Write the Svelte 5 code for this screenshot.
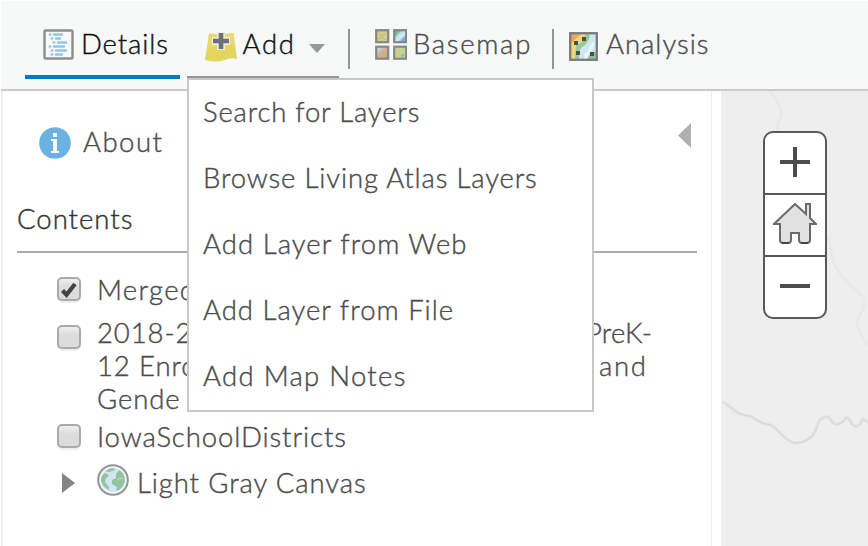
<script>
  const menu = [
    { label: 'Search for Layers', spacing: 0.8 },
    { label: 'Browse Living Atlas Layers', spacing: 0.85 },
    { label: 'Add Layer from Web', spacing: 1.05 },
    { label: 'Add Layer from File', spacing: 1 },
    { label: 'Add Map Notes', spacing: 1.3 }
  ];
</script>

<div class="app">
  <header>
    <button class="tab details">
      <svg width="32" height="32" viewBox="0 0 32 32">
        <rect x="1.5" y="1.5" width="28" height="28" rx="1" fill="#f7f8f8" stroke="#8c8e8e" stroke-width="2.4" />
        <g stroke="#92c3e8" stroke-width="2.4" stroke-linecap="round">
          <path d="M6.8 5.5h.4M11 5.5h8M8.8 9.5h.4M13 9.5h4M10.8 13.5h.4M15 13.5h8M6.8 17.5h.4M11 17.5h10M8.8 21.5h.4M13 21.5h10M8.8 25.5h.4M13 25.5h6" />
        </g>
      </svg>
      <span>Details</span>
    </button>
    <button class="tab add">
      <svg width="34" height="32" viewBox="0 0 34 32">
        <path d="M5 3.5Q17 5 29.5 3L33 29Q26 27 21 30Q11 33 1 30Z" fill="#e3d560" />
        <path d="M5 3.5Q17 5 29.5 3L31 15Q17 12 3 20Z" fill="#e9dd7c" opacity=".6" />
        <path d="M17 2v18M8 11h18" stroke="#efedd9" stroke-width="8" />
        <path d="M17 3v16M9 11h16" stroke="#6c7077" stroke-width="4.6" />
      </svg>
      <span>Add</span>
      <svg class="caret" width="16" height="9" viewBox="0 0 16 9"><path d="M0 0h16L8 9z" fill="#989898" /></svg>
    </button>
    <i class="sep first"></i>
    <button class="tab basemap">
      <svg width="32" height="31" viewBox="0 0 32 31">
        <defs>
          <linearGradient id="water" x2="1" y2="1"><stop offset=".25" stop-color="#80bba0" /><stop offset=".4" stop-color="#c2e1ee" /><stop offset=".6" stop-color="#d5eaf6" /><stop offset=".75" stop-color="#78abd0" /></linearGradient>
          <linearGradient id="land" x2="1" y2="1"><stop offset=".2" stop-color="#b6d5e9" /><stop offset=".45" stop-color="#d4b18e" /><stop offset="1" stop-color="#cda578" /></linearGradient>
        </defs>
        <g stroke="#858787" stroke-width="2.2">
          <rect x="1.2" y="1.2" width="12" height="12" fill="#d1ce86" /><rect x="19.2" y="1.2" width="12" height="12" fill="url(#water)" />
          <rect x="1.2" y="17.7" width="12" height="12" fill="url(#land)" /><rect x="19.2" y="17.7" width="12" height="12" fill="#b9dba8" />
        </g>
        <path d="M4 5l3 2 4-3M3 10l4-2 3 3" stroke="#a9bd82" fill="none" />
        <path d="M21 20l4 4 4-4M21 28l4-4" stroke="#e3c570" stroke-width="2" fill="none" /><path d="M25 27l4-3v4z" fill="#83bfa6" />
      </svg>
      <span>Basemap</span>
    </button>
    <i class="sep second"></i>
    <button class="tab analysis">
      <svg width="30" height="30" viewBox="0 0 30 30">
        <rect x="1" y="1" width="27" height="27" fill="#cee7f3" />
        <path d="M1 1h20Q21 9 15 14Q9 15 10 28H1Z" fill="#9bc69a" />
        <path d="M1 1h16Q14 12 7 13L6 28H1Z" fill="#efd57c" /><path d="M1 1h12L1 12Z" fill="#f2a254" />
        <path d="M15 28Q14 22 19 19Q20 12 26 10L23 18Q18 21 20 28Z" fill="#edf5fc" />
        <path d="M18 28Q20 20 28 19v9Z" fill="#8fc29a" />
        <g fill="#455057"><rect x="13" y="5" width="4" height="4" /><rect x="5" y="9" width="4" height="4" /><rect x="7" y="19" width="4" height="4" /><rect x="21" y="20" width="4" height="4" /></g>
        <rect x="1.2" y="1.2" width="26.6" height="26.6" fill="none" stroke="#7a7c7c" stroke-width="2.3" />
      </svg>
      <span>Analysis</span>
    </button>
  </header>

  <main>
    <section class="panel">
      <div class="about">
        <svg width="32" height="32" viewBox="0 0 32 32"><circle cx="16" cy="16" r="15.8" fill="#6bb2e2" /><path d="M14 6h4v4h-4zM12 12h6v12h2v2h-8v-2h2V14h-2z" fill="#f5f9fc" /></svg>
        <span>About</span>
        <svg class="collapse" width="13" height="25" viewBox="0 0 13 25"><path d="M13 0v25L0 12.5z" fill="#b0b0b0" /></svg>
      </div>
      <h2><span>Contents</span></h2>
      <div class="row merged">
        <i class="box"><svg width="20" height="20" viewBox="0 0 20 20"><path d="M3.5 11.5l4 4.2L16 5" fill="none" stroke="#444" stroke-width="4.2" /></svg></i>
        <span>Merged</span>
      </div>
      <div class="row enroll">
        <i class="box"></i>
        <div class="lines">
          <div><span>2018-2</span><span class="prek">PreK-</span></div>
          <div><span>12 Enro</span><span class="and">and</span></div>
          <div><span>Gende</span></div>
        </div>
      </div>
      <div class="row iowa"><i class="box"></i><span>IowaSchoolDistricts</span></div>
      <div class="row canvas">
        <svg class="twist" width="13" height="20" viewBox="0 0 13 20"><path d="M0 0v20l13-10z" fill="#848484" /></svg>
        <svg class="globe" width="32" height="32" viewBox="0 0 32 32">
          <circle cx="16" cy="16" r="14.8" fill="#f6f8f8" stroke="#929496" stroke-width="2" />
          <circle cx="16" cy="16" r="12" fill="#d0e6f6" />
          <path d="M4 16Q4 10 9 9L12 12L9 14L8 18L12 23L12 26Q5 23 4 16ZM8 7Q12 4 17 4L18 6L12 8ZM22 6Q28 9 28 17Q26 25 19 27L20 23L15 20L15 16L19 14L19 10Z" fill="#91c49f" />
          <path d="M20 16l3-2 3 1" stroke="#c5dfc7" fill="none" />
        </svg>
        <span>Light Gray Canvas</span>
      </div>
    </section>
    <section class="map">
      <svg class="rivers" width="147" height="455" viewBox="721 91 147 455" fill="none">
        <path d="M769 91C777 99 784 109 780 118S778 128 780 133M828 236C833 246 829 257 837 269C846 284 858 290 864 298Q866 306 860 314C853 326 862 337 868 345" stroke="#e7e8ea" stroke-width="2.5" />
        <path d="M723 402C733 408 738 416 750 416C758 420 762 425 771 425C779 430 784 440 794 443C805 443 815 438 818 423Q821 416 829 417C835 429 841 424 846 418Q849 417 852 424Q858 430 863 419L868 422" stroke="#e5e5e6" stroke-width="3.5" />
        <path d="M723 402C733 408 738 416 750 416C758 420 762 425 771 425C779 430 784 440 794 443C805 443 815 438 818 423Q821 416 829 417C835 429 841 424 846 418Q849 417 852 424Q858 430 863 419L868 422" stroke="#d9d9da" stroke-width="1.3" />
      </svg>
      <div class="zoom">
        <button aria-label="Zoom in"><svg width="30" height="30" viewBox="0 0 30 30"><path d="M15 0v30M0 15h30" stroke="#4c4c4c" stroke-width="4" /></svg></button>
        <button aria-label="Home"><svg width="44" height="42" viewBox="0 0 44 42"><path d="M22 1L1 21h6v16q0 3 3 3h5q3 0 3-3v-7h8v7q0 3 3 3h5q3 0 3-3V21h6l-6-6V1h-4v10z" fill="#e1e1e1" stroke="#6a6a6a" stroke-width="2" /><path d="M9 40h7M28 40h7" stroke="#444" stroke-width="2" /></svg></button>
        <button aria-label="Zoom out"><svg width="30" height="30" viewBox="0 0 30 30"><path d="M0 15h30" stroke="#4c4c4c" stroke-width="4" /></svg></button>
      </div>
    </section>
  </main>

  <nav class="menu">
    {#each menu as item}
      <button><span style="letter-spacing: {item.spacing}px">{item.label}</span></button>
    {/each}
  </nav>
</div>

<style>
  :global(body) { margin: 0; background: #fff; }
  * { box-sizing: border-box; }
  .app { position: relative; width: 868px; height: 546px; padding: 1px 0 0 1px; overflow: hidden; font: 300 27.5px/33px Lato, sans-serif; letter-spacing: .9px; color: #4c4c4c; -webkit-text-stroke: .4px currentColor; }
  button { border: 0; padding: 0; margin: 0; background: none; font: inherit; letter-spacing: inherit; color: inherit; display: flex; }
  span { white-space: nowrap; }
  svg { display: block; flex: none; }
  header { height: 90px; display: flex; align-items: flex-start; background: #f7f9f8; border-bottom: 2px solid #c9cbca; }
  .tab { height: 78px; align-items: flex-start; flex: none; }
  .tab span { margin-top: 26px; }
  .details { width: 155px; margin-left: 24px; padding-left: 18px; border-bottom: 4px solid #0878c0; color: #111; }
  .details svg { margin: 28px 6px 0 0; }
  .add { width: 152px; height: 77px; margin-left: 7px; padding-left: 17px; border-bottom: 2px solid #959595; color: #111; }
  .add svg { margin: 29px 3px 0 0; }
  .add span { width: 56px; letter-spacing: 1.6px; }
  .add .caret { margin: 43px 0 0 12px; }
  .sep { flex: none; width: 2px; height: 40px; margin-top: 28px; background: #959595; }
  .first { margin-left: 9px; }
  .basemap { width: 177px; padding-left: 25px; letter-spacing: 1.7px; }
  .basemap svg { margin: 28px 6px 0 0; }
  .second { margin-left: 25px; }
  .analysis { padding-left: 15px; letter-spacing: 1px; }
  .analysis svg { margin: 31px 7px 0 0; }
  main { display: flex; height: 455px; }
  .panel { width: 711px; border-left: 2px solid #eee; border-right: 1px solid #eee; }
  .about { display: flex; height: 52px; padding: 0 19px 0 36px; margin-top: 26px; letter-spacing: 1.5px; }
  .about svg { margin-top: 10px; }
  .about span { margin: 8px 0 0 12px; }
  .about .collapse { margin: 6px 1px 0 auto; }
  h2 { height: 84px; margin: 0 14px 0 14px; padding-top: 33px; font: inherit; color: #333; border-bottom: 2px solid #ababab; letter-spacing: 1px; }
  .row { display: flex; margin-left: 54px; }
  .box { flex: none; width: 24px; height: 24px; margin-right: 16px; border: 2px solid #aaa; border-radius: 5px; background: linear-gradient(#efefef, #dcdcdc 40%); box-shadow: 0 2px 1px #eee; }
  .merged { margin-top: 20px; height: 43px; letter-spacing: 1.3px; }
  .merged .box { margin-top: 4px; }
  .enroll { height: 99px; }
  .enroll .box { margin-top: 9px; }
  .lines > div { display: flex; width: 590px; }
  .lines div span:first-child { width: 91px; margin-right: 398px; }
  .iowa { margin-top: 5px; height: 38px; }
  .iowa .box { margin-top: 4px; }
  .canvas { padding-left: 5px; }
  .twist { margin: 15px 22px 0 0; }
  .canvas span { margin: 8px 0 0 8px; }
  .globe { margin-top: 6px; }
  .prek { letter-spacing: .2px; }
  .and { padding-left: 13px; letter-spacing: 1.7px; }
  .map { position: relative; width: 147px; margin-left: 9px; background: #eee; padding: 40px 0 0 42px; }
  .rivers { position: absolute; inset: 0; }
  .zoom { position: relative; width: 64px; height: 188px; border: 2px solid #595959; border-radius: 10px; background: #fff; }
  .zoom button { width: 60px; height: 62px; padding-bottom: 2px; align-items: center; justify-content: center; border-bottom: 2px solid #595959; }
  .zoom button:last-child { height: 60px; border: 0; }
  .menu { position: absolute; left: 187px; top: 78px; width: 407px; height: 334px; background: #fff; border: 2px solid #c8c8c8; }
  .menu button { width: 100%; height: 66px; padding: 15px 0 0 14px; }
</style>
